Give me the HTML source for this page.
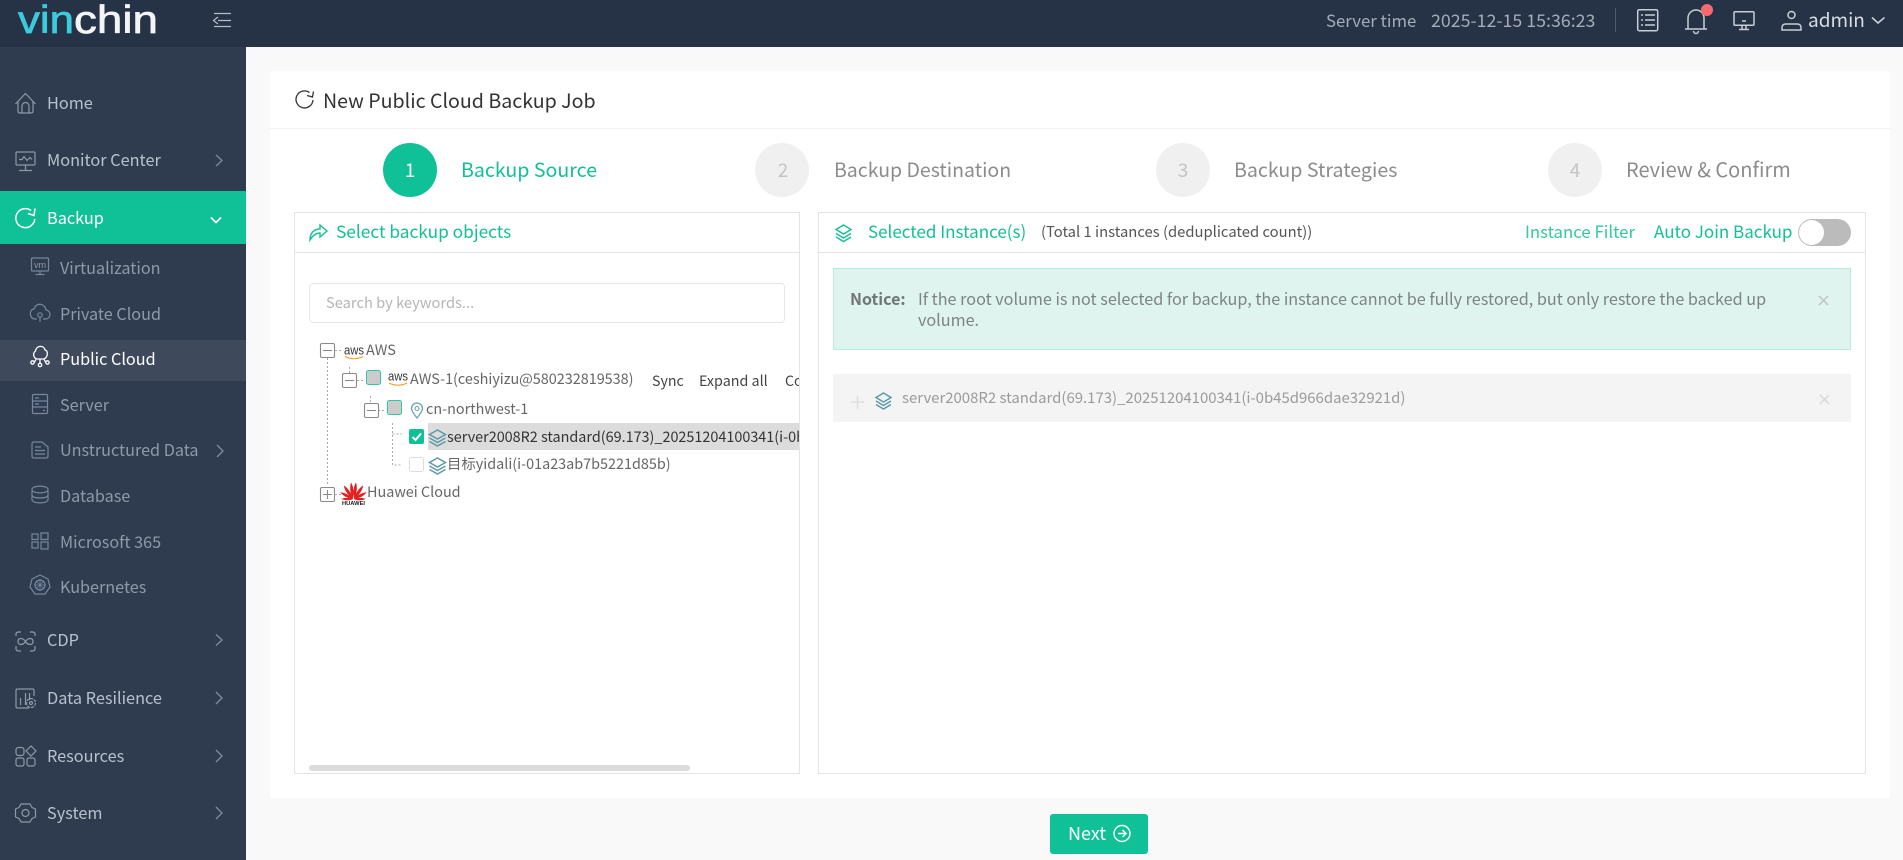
<!DOCTYPE html>
<html><head><meta charset="utf-8"><title>New Public Cloud Backup Job</title>
<style>
html,body{margin:0;padding:0}
body{width:1903px;height:860px;overflow:hidden;position:relative;background:#f9f9f9;font-family:"Noto Sans CJK SC","Liberation Sans",sans-serif;}
.b{position:absolute}
.t{position:absolute;white-space:nowrap;height:24px;line-height:24px;font-size:15px}
.s1{font-size:16.3px;color:#b7c2ce}
.s2{font-size:16.2px;color:#8d9aa9}
.g{color:#13bf97}
.d{color:#666;font-size:14.4px}
svg{position:absolute;left:0;top:0}
</style></head><body>
<div class="b" style="left:0;top:0;width:1903px;height:47px;background:#263246"></div>
<div class="b" style="left:0;top:47px;width:246px;height:813px;background:#2f3c4f"></div>
<div class="b" style="left:0;top:191px;width:246px;height:53px;background:#10c097"></div>
<div class="b" style="left:0;top:340px;width:246px;height:41px;background:#3e4a5b"></div>
<div class="b" style="left:270px;top:71px;width:1620px;height:727px;background:#fff"></div>
<div class="b" style="left:270px;top:128px;width:1620px;height:1px;background:#f2f2f2"></div>

<div class="b" style="left:294px;top:212px;width:506px;height:562px;border:1px solid #e4e4e4;box-sizing:border-box"></div>
<div class="b" style="left:294px;top:252px;width:506px;height:1px;background:#e4e4e4"></div>
<div class="b" style="left:818px;top:212px;width:1048px;height:562px;border:1px solid #e4e4e4;box-sizing:border-box"></div>
<div class="b" style="left:818px;top:252px;width:1048px;height:1px;background:#e4e4e4"></div>
<div class="b" style="left:309px;top:283px;width:476px;height:40px;border:1px solid #e4e7ed;border-radius:4px;box-sizing:border-box"></div>
<div class="b" style="left:428px;top:423px;width:371px;height:27px;background:#dcdcdc"></div>
<div class="b" style="left:309px;top:765px;width:381px;height:6px;background:#dcdcdc;border-radius:3px"></div>
<div class="b" style="left:833px;top:268px;width:1018px;height:82px;background:#dff4ee;border:1px solid #b5ecdc;box-sizing:border-box"></div>
<div class="b" style="left:833px;top:374px;width:1018px;height:48px;background:#f4f4f4"></div>
<div class="b" style="left:1798px;top:219px;width:53px;height:27px;border-radius:14px;background:#bbb"></div>
<div class="b" style="left:1799px;top:220px;width:25px;height:25px;border-radius:50%;background:#fff"></div>
<div class="b" style="left:383px;top:143px;width:54px;height:54px;border-radius:50%;background:#10c097"></div>
<div class="b" style="left:755px;top:143px;width:54px;height:54px;border-radius:50%;background:#f0f0f0"></div>
<div class="b" style="left:1156px;top:143px;width:54px;height:54px;border-radius:50%;background:#f0f0f0"></div>
<div class="b" style="left:1548px;top:143px;width:54px;height:54px;border-radius:50%;background:#f0f0f0"></div>
<div class="b" style="left:1050px;top:814px;width:98px;height:40px;border-radius:3px;background:#10c097"></div>

<svg width="1903" height="860" viewBox="0 0 1903 860" fill="none">
<!-- logo -->
<text x="18" y="33" font-family="Liberation Sans,sans-serif" font-size="39" textLength="56" lengthAdjust="spacingAndGlyphs" fill="#3ccbdd" stroke="#3ccbdd" stroke-width=".7">vin</text>
<text x="74" y="33" font-family="Liberation Sans,sans-serif" font-size="39" textLength="84" lengthAdjust="spacingAndGlyphs" fill="#f2f4f6" stroke="#f2f4f6" stroke-width=".7">chin</text>
<path d="M214 13.5H231M218 20.5H231M214 26.5H231M218 17L213.500 20.500L218 24" stroke="#b5bdc8" stroke-width="1.2"/>
<!-- top icons -->
<g stroke="#c7ced6" stroke-width="1.5">
<rect x="1637.700" y="9.700" width="20" height="21" rx="1.500"/>
<path d="M1641 15H1643M1645 15H1655M1641 20H1643M1645 20H1655M1641 25H1643M1645 25H1655"/>
<path d="M1685 29H1707M1688 29V18A8 8 0 0 1 1704 18V29M1693.500 31A2.500 2.500 0 0 0 1698.500 31"/>
<rect x="1734" y="11.700" width="20" height="13.500" rx="1"/>
<path d="M1742 25V29M1746 25V29M1739 29.500H1749M1742 21H1746"/>
<circle cx="1791.500" cy="15" r="3.500"/>
<path d="M1782 30V27.500Q1782 24 1786 24H1797Q1801 24 1801 27.500V30Z"/>
<path d="M1872 17.500L1878 23L1884.500 17.500" stroke-width="1.600"/>
</g>
<circle cx="1707" cy="10" r="6" fill="#f7686f"/>
<path d="M1615.500 8V32" stroke="#4d596b"/>
<!-- sidebar main icons -->
<g stroke="#8e99a8" stroke-width="1.200">
<path d="M15.500 104L25.500 93.500L35.500 104M18 101V111Q18 113 20 113H31Q33 113 33 111V101M22 113V106A3.500 3.500 0 0 1 29 106V113"/>
<rect x="16" y="152" width="19" height="13" rx="1"/>
<path d="M19 159.500H22L24 156.500L27 160.500L30 157.500L32 159.500M25.500 165V170M19 170.500H32"/>
<path d="M16 636V634Q16 632 19 632H21M30 632H32Q35 632 35 634V636M16 646V649Q16 651 19 651H21M30 651H32Q35 651 35 649V646M25.500 641.500C23 637.500 18 637.500 18 641.500C18 645.500 23 645.500 25.500 641.500C28 637.500 33 637.500 33 641.500C33 645.500 28 645.500 25.500 641.500Z"/>
<path d="M29 708H17.500Q16 708 16 706.500V690.500Q16 689 17.500 689H32.500Q34 689 34 690.500V696M20.500 705V698M25.500 705V693M29.500 700V693"/>
<circle cx="31" cy="703" r="4.500" stroke-dasharray="3 1"/><circle cx="31" cy="703" r="1.500"/>
<rect x="16" y="747.500" width="8" height="8" rx="2.500"/><rect x="16" y="758" width="8" height="8" rx="2"/><rect x="27" y="758" width="8" height="8" rx="2"/>
<path d="M31 746L36 751L31 756L26 751Z"/>
<path d="M21 804L30 804L32 807.500L35.500 809L35.500 817L32 818.500L30 822L21 822L19 818.500L15.500 817L15.500 809L19 807.500Z" stroke-linejoin="round"/>
<circle cx="25.500" cy="813" r="3.500"/>
</g>
<path d="M34.800 219A9.500 9.500 0 1 1 31 210.500M35 208.500L34 215.500L28 213.500" stroke="#fff" stroke-width="1.500"/>
<path d="M211 217.500L216 222.500L221 217.500" stroke="#fff" stroke-width="1.700"/>
<g stroke="#7f8c9b" stroke-width="1.300"><path d="M216 155L222 160.500L216 166M216 634.500L222 640L216 645.500M216 692L222 698L216 704M216 750L222 756L216 762M216 807L222 813L216 819M217 445L223 451L217 457"/></g>
<!-- sub icons -->
<g stroke="#76879c" stroke-width="1.200">
<rect x="31.500" y="258" width="17" height="13" rx="1"/>
<path d="M40 271V274M35.500 274.500H44.500"/>
<path d="M35 319H37M43 319H45A4.500 4.500 0 0 0 46 310C45 303 36 302 34 309C29 309 29 319 35 319"/>
<circle cx="40" cy="315" r="2.200"/><path d="M40 317.500V322"/>
<rect x="32.500" y="394.500" width="15" height="19" rx="1"/>
<path d="M32.500 401H47.500M32.500 407H47.500M35 398H39M35 404H39M43 410.500H45"/>
<path d="M32 444Q32 442 34 442H42L48 447V456Q48 458 46 458H34Q32 458 32 456ZM35 447H41M35 450.500H45M35 454H45"/>
<path d="M32 489.500C32 485 48 485 48 489.500V499.500C48 504 32 504 32 499.500ZM32 489.500C32 494 48 494 48 489.500M32 495C32 499 48 499 48 495"/>
<path d="M32 534H38V539.500H32ZM32 542H38V548H32ZM41 533H48V539.500H41ZM41 542H48V549H41Z"/>
<path d="M40 575L48 579L50 587L45 594H35L30 587L32 579Z"/>
<circle cx="40" cy="585" r="5"/><path d="M40 579V591M34 585H46M36 581L44 589M44 581L36 589" stroke-width=".8"/>
</g>
<text x="34" y="268" font-family="Liberation Sans,sans-serif" font-size="9" fill="#8d9aa9">vm</text>
<g stroke="#fff" stroke-width="1.300">
<path d="M37 359A4.500 4.500 0 0 1 35.500 351C36.500 345 44 345 45 350C48 350 48.500 357 44 359H37Z"/>
<path d="M40 359V363M36 359.500L34 362.500M44 359.500L46 362.500"/>
<circle cx="40" cy="365" r="1.700"/><circle cx="32.500" cy="362.500" r="1.700"/><circle cx="47.500" cy="362.500" r="1.700"/>
</g>
<!-- title -->
<path d="M313 100A8.500 8.500 0 1 1 309.500 92.500M313.500 91.500L312.500 97L307 95.500" stroke="#333" stroke-width="1.300"/>
<!-- select icon -->
<path d="M310 240C310 233 314 229 320 229V225L327 231L320 237V233C316 233 313 235 310 240Z" stroke="#13bf97" stroke-width="1.400"/>
<!-- selected stack -->
<g stroke="#13bf97" stroke-width="1.400"><path d="M843.500 225L851 229.500L843.500 234L836 229.500Z"/><path d="M836 233.500L843.500 238L851 233.500M836 237L843.500 241.500L851 237"/></g>
<!-- tree lines -->
<g stroke="#aaa" stroke-dasharray="2 2">
<path d="M327.500 358V486M335 350.500H343M349.500 367V373M357 380.500H365M370.500 396V403M378 410.500H386M392.500 423V465H402M392.500 434H402M335 494.500H342"/>
</g>
<!-- tree toggles -->
<g stroke="#8a8a8a" stroke-width="1.100">
<rect x="320.500" y="343.500" width="14" height="14" rx="1.500"/><path d="M323 350.500H332"/>
<rect x="342.500" y="373.500" width="14" height="14" rx="1.500"/><path d="M345 380.500H354"/>
<rect x="364.500" y="403.500" width="14" height="14" rx="1.500"/><path d="M367 410.500H376"/>
<rect x="320.500" y="487.500" width="14" height="14" rx="1.500"/><path d="M323 494.500H332M327.500 490V499"/>
</g>
<!-- checkboxes -->
<rect x="366.500" y="370.500" width="14" height="14" rx="2" fill="#ccc" stroke="#2dc9a6"/>
<rect x="387.500" y="400.500" width="14" height="14" rx="2" fill="#ccc" stroke="#2dc9a6"/>
<rect x="409" y="429" width="15" height="15" rx="2" fill="#10c097"/>
<path d="M412.500 437L415.500 440L421 433.500" stroke="#fff" stroke-width="2"/>
<rect x="409.500" y="457.500" width="14" height="14" rx="2" fill="#fff" stroke="#ddd"/>
<!-- aws -->
<text x="344" y="354.500" font-family="Liberation Sans,sans-serif" font-size="12.500" fill="#333" textLength="20" lengthAdjust="spacingAndGlyphs">aws</text>
<path d="M345 356.500Q354 361 363 356.500" stroke="#f79a1e" stroke-width="1.100"/>
<text x="388" y="380.500" font-family="Liberation Sans,sans-serif" font-size="12.500" fill="#333" textLength="20" lengthAdjust="spacingAndGlyphs">aws</text>
<path d="M389 383Q398 387.500 407 383" stroke="#f79a1e" stroke-width="1.100"/>
<!-- pin -->
<path d="M417 418C413 413 411.500 410 411.500 408.500A5.500 5.500 0 0 1 422.500 408.500C422.500 410 421 413 417 418Z" stroke="#6aa3b4" stroke-width="1.300"/><circle cx="417" cy="408.500" r="2" stroke="#6aa3b4" stroke-width="1.100"/>
<!-- stacks -->
<g stroke="#5e9aa8" stroke-width="1.500">
<path d="M437.500 430L445.500 434.500L437.500 439L429.500 434.500Z"/><path d="M429.500 438L437.500 442.500L445.500 438M429.500 441.500L437.500 446L445.500 441.500"/>
<path d="M437.500 458L445.500 462.500L437.500 467L429.500 462.500Z"/><path d="M429.500 466L437.500 470.500L445.500 466M429.500 469.500L437.500 474L445.500 469.500"/>
<path d="M883.500 393L891 397.500L883.500 402L876 397.500Z"/><path d="M876 401L883.500 405.500L891 401M876 404.500L883.500 409L891 404.500"/>
</g>
<path d="M851 402H864M857.500 396V409" stroke="#ddd" stroke-width="1.500"/>
<!-- huawei -->
<g fill="#e1201f" transform="translate(353.500 498.500)">
<path d="M-.6 0C-3.600 -5 -4 -12 -2.400 -16C0 -12 .6 -6 -.6 0Z"/>
<path d="M-.6 0C-3.600 -5 -4 -12 -2.400 -16C0 -12 .6 -6 -.6 0Z" transform="rotate(-28)"/>
<path d="M-.6 0C-3.600 -5 -4 -12 -2.400 -16C0 -12 .6 -6 -.6 0Z" transform="rotate(-56) scale(.9)"/>
<path d="M-.6 0C-3.600 -5 -4 -12 -2.400 -16C0 -12 .6 -6 -.6 0Z" transform="rotate(-84) scale(.75)"/>
<path d="M.6 0C3.600 -5 4 -12 2.400 -16C0 -12 -.6 -6 .6 0Z"/>
<path d="M.6 0C3.600 -5 4 -12 2.400 -16C0 -12 -.6 -6 .6 0Z" transform="rotate(28)"/>
<path d="M.6 0C3.600 -5 4 -12 2.400 -16C0 -12 -.6 -6 .6 0Z" transform="rotate(56) scale(.9)"/>
<path d="M.6 0C3.600 -5 4 -12 2.400 -16C0 -12 -.6 -6 .6 0Z" transform="rotate(84) scale(.75)"/>
</g>
<text x="342" y="505" font-family="Liberation Sans,sans-serif" font-size="5" font-weight="700" fill="#222" textLength="23" lengthAdjust="spacingAndGlyphs">HUAWEI</text>
<!-- close -->
<path d="M1819 296L1828 305M1828 296L1819 305" stroke="#bcc4c4" stroke-width="1.500"/>
<path d="M1820 395L1829 404M1829 395L1820 404" stroke="#d8d8d8" stroke-width="1.500"/>
<!-- next -->
<circle cx="1122" cy="833.500" r="8" stroke="#fff" stroke-width="1.400"/><path d="M1118 833.500H1126M1122.500 830L1126 833.500L1122.500 837" stroke="#fff" stroke-width="1.400"/>
</svg>

<div class="t" style="left:1326px;top:8px;font-size:16.800px;color:#a3acb8">Server time</div>
<div class="t" style="left:1431px;top:8px;font-size:17.800px;color:#a3acb8">2025-12-15 15:36:23</div>
<div class="t" style="left:1808px;top:8px;font-size:19px;color:#d8dde3">admin</div>

<div class="t s1" style="left:47px;top:90px">Home</div>
<div class="t s1" style="left:47px;top:147px">Monitor Center</div>
<div class="t s1" style="left:47px;top:205px;color:#fff">Backup</div>
<div class="t s2" style="left:60px;top:255px">Virtualization</div>
<div class="t s2" style="left:60px;top:301px">Private Cloud</div>
<div class="t s2" style="left:60px;top:346px;color:#fff">Public Cloud</div>
<div class="t s2" style="left:60px;top:392px">Server</div>
<div class="t s2" style="left:60px;top:437px">Unstructured Data</div>
<div class="t s2" style="left:60px;top:483px">Database</div>
<div class="t s2" style="left:60px;top:529px">Microsoft 365</div>
<div class="t s2" style="left:60px;top:574px">Kubernetes</div>
<div class="t s1" style="left:47px;top:627px">CDP</div>
<div class="t s1" style="left:47px;top:685px">Data Resilience</div>
<div class="t s1" style="left:47px;top:743px">Resources</div>
<div class="t s1" style="left:47px;top:800px">System</div>

<div class="t" style="left:323px;top:88px;font-size:19.600px;color:#333">New Public Cloud Backup Job</div>
<div class="t g" style="left:461px;top:157px;font-size:19.600px">Backup Source</div>
<div class="t" style="left:834px;top:157px;font-size:19.500px;color:#8c8c8c">Backup Destination</div>
<div class="t" style="left:1234px;top:157px;font-size:19.600px;color:#8c8c8c">Backup Strategies</div>
<div class="t" style="left:1626px;top:157px;font-size:20px;color:#8c8c8c">Review &amp; Confirm</div>
<div class="t" style="left:383px;top:158px;width:54px;text-align:center;font-size:19px;color:#fff">1</div>
<div class="t" style="left:756px;top:158px;width:54px;text-align:center;font-size:19px;color:#c4c4c4">2</div>
<div class="t" style="left:1156px;top:158px;width:54px;text-align:center;font-size:19px;color:#c4c4c4">3</div>
<div class="t" style="left:1548px;top:158px;width:54px;text-align:center;font-size:19px;color:#c4c4c4">4</div>

<div class="t g" style="left:336px;top:219px;font-size:17.300px">Select backup objects</div>
<div class="t g" style="left:868px;top:219px;font-size:17px">Selected Instance(s)</div>
<div class="t" style="left:1041px;top:220px;font-size:14.800px;color:#555">(Total 1 instances (deduplicated count))</div>
<div class="t g" style="left:1525px;top:219px;font-size:16.800px;color:#35c79f">Instance Filter</div>
<div class="t g" style="left:1654px;top:219px;font-size:17px">Auto Join Backup</div>

<div class="t" style="left:326px;top:291px;font-size:14.700px;color:#b5b5b5">Search by keywords...</div>
<div class="t d" style="left:366px;top:338px">AWS</div>
<div class="t d" style="left:410px;top:367px">AWS-1(ceshiyizu@580232819538)</div>
<div class="t" style="left:652px;top:369px;font-size:14.200px;color:#444">Sync</div>
<div class="t" style="left:699px;top:369px;font-size:14.300px;color:#444">Expand all</div>
<div class="t" style="left:785px;top:369px;font-size:14.200px;color:#444;width:14px;overflow:hidden">Collapse</div>
<div class="t d" style="left:426px;top:397px">cn-northwest-1</div>
<div class="t" style="left:447px;top:425px;width:352px;overflow:hidden;font-size:14.400px;color:#333">server2008R2 standard(69.173)_20251204100341(i-0b45d966dae32921d)</div>
<div class="t d" style="left:447px;top:452px">目标yidali(i-01a23ab7b5221d85b)</div>
<div class="t d" style="left:367px;top:480px">Huawei Cloud</div>

<div class="t" style="left:850px;top:286px;font-size:16px;font-weight:700;color:#6f7675">Notice:</div>
<div class="t" style="left:918px;top:286px;font-size:16.200px;color:#7d8483">If the root volume is not selected for backup, the instance cannot be fully restored, but only restore the backed up</div>
<div class="t" style="left:918px;top:307px;font-size:16.200px;color:#7d8483">volume.</div>
<div class="t" style="left:902px;top:386px;font-size:14.930px;color:#9b9b9b">server2008R2 standard(69.173)_20251204100341(i-0b45d966dae32921d)</div>

<div class="t" style="left:1068px;top:821px;font-size:18px;color:#fff">Next</div>
</body></html>
